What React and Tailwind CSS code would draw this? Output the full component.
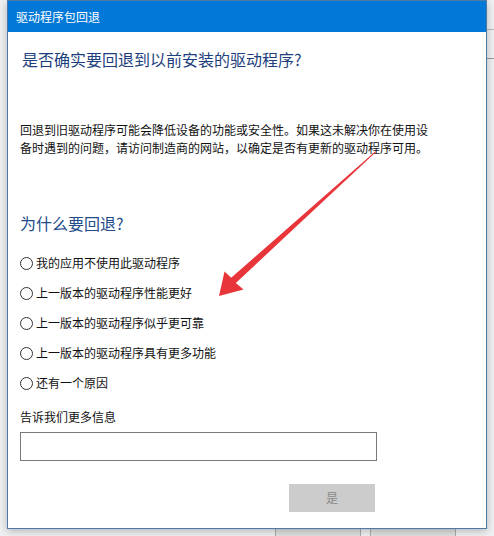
import React from 'react';

const reasons = [
  '我的应用不使用此驱动程序',
  '上一版本的驱动程序性能更好',
  '上一版本的驱动程序似乎更可靠',
  '上一版本的驱动程序具有更多功能',
  '还有一个原因',
];

const font = { fontFamily: '"Noto Sans CJK SC", "Noto Sans", sans-serif' };

export default function App() {
  return (
    <div
      className="relative w-[494px] h-[536px] overflow-hidden bg-[#eef0f2]"
      style={font}
    >
      {/* window behind the dialog */}
      <div className="absolute left-[486px] top-[29px] w-[8px] h-px bg-[#b9b9b9]" />
      <div className="absolute left-[486px] top-[58px] w-[8px] h-px bg-[#9a9a9a]" />
      <div className="absolute left-[275px] top-[527px] w-[86px] h-[12px] border border-[#adadad] bg-[#e1e1e1]" />
      <div className="absolute left-[370px] top-[527px] w-[86px] h-[12px] border border-[#adadad] bg-[#e1e1e1]" />

      {/* dialog */}
      <div className="absolute left-[7px] top-0 w-[480px] h-[529px] border border-[#4f7aa6] bg-white shadow-[0_2px_8px_rgba(0,0,0,0.25)] flex flex-col">
        <div className="h-[31px] bg-[#0078d7] flex items-center pl-[8px] text-white text-[12px]">
          驱动程序包回退
        </div>

        <div className="flex flex-col">
          <h1 className="mt-[15px] ml-[14px] text-[16px] leading-[24px] text-[#1e3f7e]">
            是否确实要回退到以前安装的驱动程序?
          </h1>

          <p className="mt-[50px] ml-[12px] w-[412px] text-[12px] leading-[18px] text-[#111]">
            回退到旧驱动程序可能会降低设备的功能或安全性。如果这未解决你在使用设备时遇到的问题，请访问制造商的网站，以确定是否有更新的驱动程序可用。
          </p>

          <h2 className="mt-[54px] ml-[12px] text-[16px] leading-[24px] text-[#234c8a]">
            为什么要回退?
          </h2>

          <div className="mt-[13px] ml-[12px] flex flex-col">
            {reasons.map((r) => (
              <label key={r} className="h-[30px] flex items-center gap-[3px] text-[12px] text-[#111]">
                <span className="w-[13px] h-[13px] rounded-full border border-[#333] bg-white" />
                {r}
              </label>
            ))}
          </div>

          <div className="mt-[10px] ml-[12px] text-[12px] leading-[18px] text-[#111]">
            告诉我们更多信息
          </div>

          <div className="mt-[6px] ml-[12px] w-[357px] h-[29px] border border-[#7a7a7a] bg-white" />

          <div className="mt-[23px] ml-[281px] w-[86px] h-[28px] bg-[#cccccc] flex items-center justify-center text-[12px] text-[#8a8a8a]">
            是
          </div>
        </div>
      </div>

      {/* red annotation arrow */}
      <svg className="absolute left-0 top-0 pointer-events-none" width="494" height="536">
        <polygon
          points="376,152 235.8,283 243.5,289.5 219,296 224.5,271.5 231.2,277.8 375.2,151.4"
          fill="#e8353a"
        />
      </svg>
    </div>
  );
}
